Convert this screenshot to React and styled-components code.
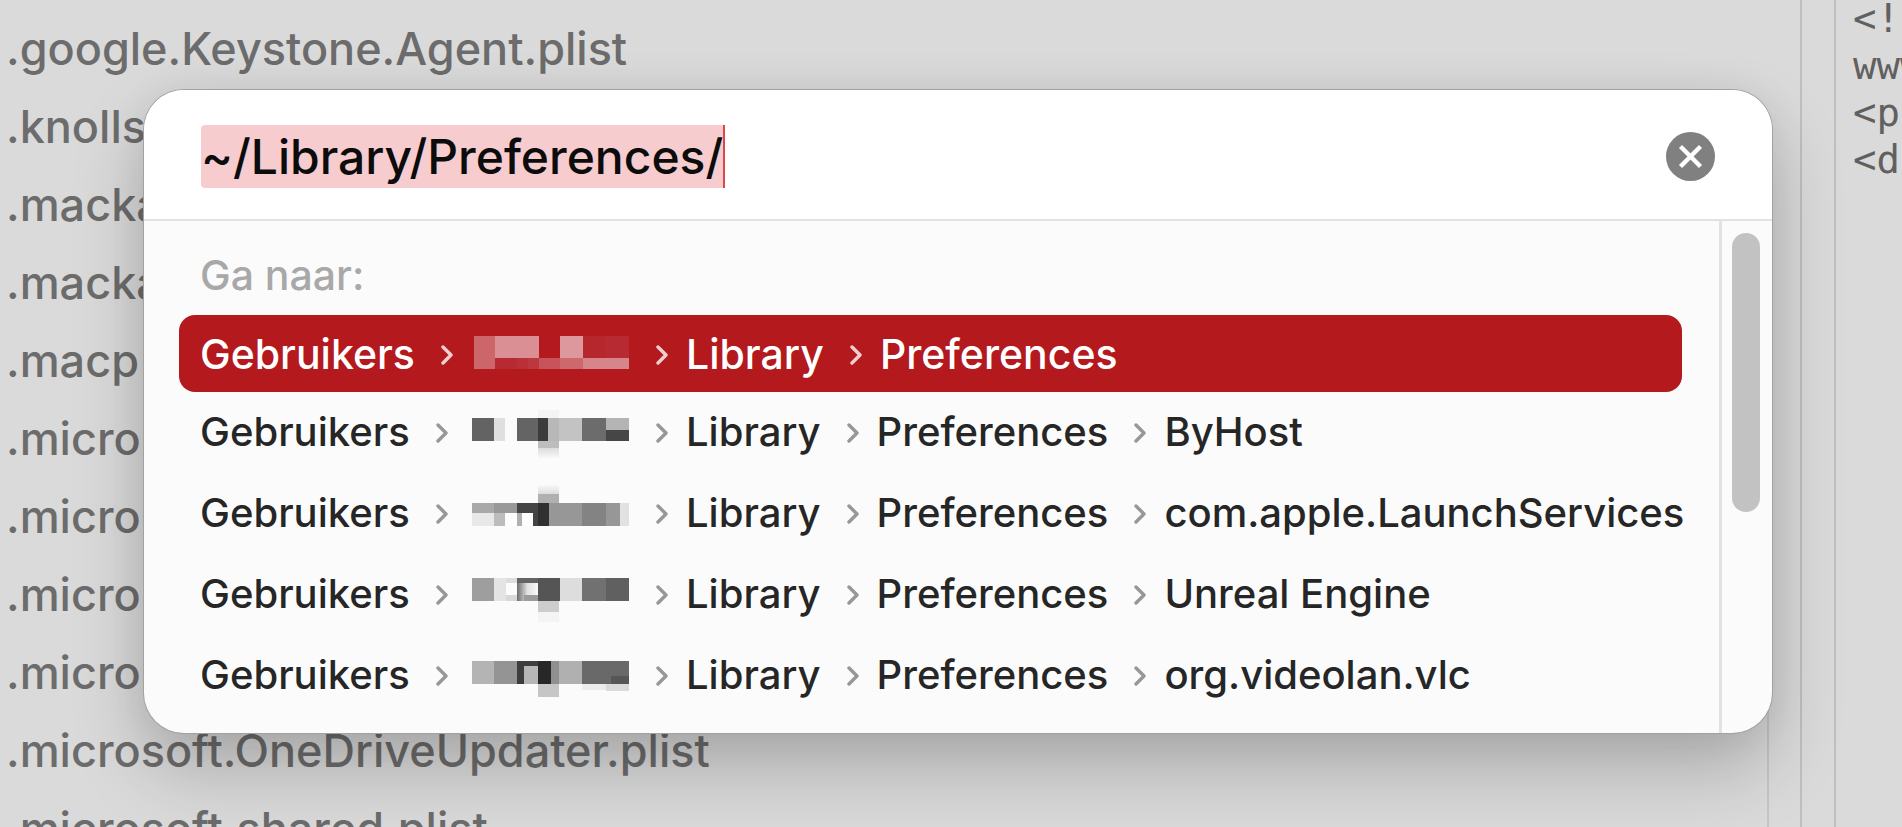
import React, { useState } from "react";
import styled, { createGlobalStyle, css } from "styled-components";

const GlobalStyle = createGlobalStyle`
  * { box-sizing: border-box; }
  body {
    margin: 0;
    background: #d9d9d9;
    font-family: Inter, "Liberation Sans", sans-serif;
    overflow: hidden;
  }
`;

const Desktop = styled.main`
  position: relative;
  display: flex;
  height: 100vh;
  overflow: hidden;
  background: #dadada;
`;

const FileColumn = styled.ul`
  flex: 1;
  min-width: 0;
  margin: 0;
  padding: 10px 0 0 6px;
  list-style: none;
`;

const FileName = styled.li`
  height: 78px;
  line-height: 78px;
  font-size: 45px;
  font-weight: 500;
  color: #6c6c6c;
  white-space: nowrap;
`;

const ColumnScroller = styled.div`
  width: 33px;
  margin-top: 130px;
  border-left: 2px solid #c6c6c6;
`;

const ColumnDivider = styled.div`
  width: 36px;
  border: solid #bfbfbf;
  border-width: 0 2px;
`;

const Preview = styled.pre`
  width: 66px;
  margin: -5px 0 0;
  padding: 0 0 0 17px;
  overflow: hidden;
  font-family: "DejaVu Sans Mono", monospace;
  font-size: 39px;
  line-height: 47px;
  color: #606060;
`;

const Dialog = styled.form`
  position: absolute;
  top: 90px;
  left: 144px;
  right: 130px;
  border-radius: 40px;
  overflow: hidden;
  background: #fbfbfb;
  box-shadow:
    0 0 0 1px #a2a2a2,
    0 0 40px rgba(0, 0, 0, 0.06),
    0 36px 72px rgba(0, 0, 0, 0.22);
`;

const SearchBar = styled.header`
  display: flex;
  align-items: center;
  justify-content: space-between;
  height: 131px;
  padding: 3px 57px 0;
  background: #fff;
  border-bottom: 2px solid #e2e2e2;
`;

const PathInput = styled.input`
  field-sizing: content;
  height: 63px;
  padding: 0;
  border: 0;
  border-right: 2px solid #e0454c;
  border-radius: 4px 0 0 4px;
  outline: 0;
  background: #f7cccf;
  color: #0c0c0c;
  font: 500 48px/63px Inter, "Liberation Sans", sans-serif;
`;

const ClearButton = styled.button`
  width: 49px;
  height: 49px;
  padding: 0;
  border: 0;
  border-radius: 50%;
  background: #808080;
  svg { display: block; }
`;

const Results = styled.div`
  display: flex;
`;

const ResultPane = styled.div`
  flex: 1;
  min-width: 0;
  padding: 30px 37px 17px 35px;
`;

const ResultTitle = styled.h2`
  height: 64px;
  margin: 0;
  padding-left: 21px;
  font-size: 41px;
  line-height: 48px;
  font-weight: 500;
  color: #a8a8a8;
`;

const ResultList = styled.ul`
  margin: 0;
  padding: 0;
  list-style: none;
`;

const ResultRow = styled.button`
  display: flex;
  align-items: center;
  width: 100%;
  height: 81px;
  padding: 0 0 2px 21px;
  border: 0;
  border-radius: 16px;
  background: transparent;
  color: #262626;
  font: 500 40px/48px Inter, "Liberation Sans", sans-serif;
  white-space: nowrap;
  ${(p) =>
    p.$selected &&
    css`
      height: 77px;
      padding-bottom: 0;
      background: #b3191d;
      color: #fff;
      font-size: 41px;
    `}
`;

const RootCrumb = styled.span`
  display: flex;
  flex: none;
  align-items: center;
  width: 272px;
`;

const ChevronIcon = styled.svg`
  flex: none;
  width: 12px;
  height: 20px;
  margin: 2px 18px 0 26px;
  fill: none;
  stroke: ${(p) => (p.$selected ? "#f0cfd0" : "#979797")};
  stroke-width: 3.4;
  stroke-linecap: round;
  stroke-linejoin: round;
`;

const Mosaic = styled.svg`
  flex: none;
  width: 158px;
  height: 77px;
`;

const ScrollTrack = styled.div`
  width: 53px;
  padding: 12px 9px 0 10px;
  border-left: 3px solid #e2e2e2;
`;

const ScrollThumb = styled.div`
  height: 279px;
  width: 28px;
  border-radius: 14px;
  background: #c2c2c2;
`;

const FILES = [
  ".google.Keystone.Agent.plist",
  ".knolls",
  ".macka",
  ".macka",
  ".macp",
  ".micro",
  ".micro",
  ".micro",
  ".micro",
  ".microsoft.OneDriveUpdater.plist",
  ".microsoft.shared.plist",
];

// Each block of a hidden user name: x, y, width, height, fill.
const ROWS = [
  {
    selected: true,
    blocks: [
      [2, 21, 21, 33, "#cc666b"],
      [23, 21, 44, 22, "#d98f93"],
      [67, 21, 21, 22, "#b3191f"],
      [88, 21, 23, 22, "#dc989c"],
      [111, 21, 23, 22, "#b5262d"],
      [134, 21, 23, 22, "#b72a31"],
      [23, 43, 22, 11, "#b82a31"],
      [45, 43, 11, 11, "#b93036"],
      [56, 43, 11, 11, "#bb383e"],
      [67, 43, 21, 11, "#c7545a"],
      [88, 43, 23, 11, "#cd686d"],
      [111, 43, 46, 11, "#d6868a"],
    ],
  },
  {
    leaf: "ByHost",
    blocks: [
      [0, 25, 22, 23, "#636363"],
      [22, 25, 11, 23, "#dfdfdf"],
      [45, 25, 21, 23, "#646464"],
      [66, 17, 21, 8, "#f4f4f4"],
      [66, 25, 10, 23, "#3c3c3c"],
      [76, 25, 11, 23, "#b8b8b8"],
      [87, 25, 23, 23, "#c3c3c3"],
      [110, 25, 24, 23, "#6c6c6c"],
      [134, 25, 23, 12, "#b4b4b4"],
      [134, 37, 23, 11, "#464646"],
      [66, 48, 21, 7, "#bdbdbd"],
      [66, 55, 21, 10, "url(#fadeDown)"],
    ],
  },
  {
    leaf: "com.apple.LaunchServices",
    blocks: [
      [0, 29, 22, 10, "#a9a9a9"],
      [0, 39, 22, 13, "#e8e8e8"],
      [22, 29, 23, 10, "#999999"],
      [22, 39, 11, 13, "#bcbcbc"],
      [33, 39, 12, 13, "#fdfdfd"],
      [45, 29, 21, 10, "#454545"],
      [45, 39, 5, 13, "#b0b0b0"],
      [50, 39, 11, 13, "#fdfdfd"],
      [61, 39, 5, 13, "#444444"],
      [66, 11, 21, 9, "url(#fadeUp)"],
      [66, 20, 21, 9, "#b0b0b0"],
      [66, 29, 11, 23, "#303030"],
      [77, 29, 33, 23, "#979797"],
      [110, 29, 24, 23, "#838383"],
      [134, 29, 14, 23, "#979797"],
      [148, 29, 9, 23, "#e2e2e2"],
    ],
  },
  {
    leaf: "Unreal Engine",
    blocks: [
      [0, 23, 22, 23, "#9e9e9e"],
      [22, 23, 12, 23, "#e4e4e4"],
      [34, 23, 11, 5, "#dddddd"],
      [34, 28, 11, 12, "#fbfbfb"],
      [34, 40, 11, 6, "#d8d8d8"],
      [45, 23, 21, 23, "url(#ashRight)"],
      [45, 23, 21, 5, "#656565"],
      [52, 40, 14, 6, "#9b9b9b"],
      [66, 23, 22, 23, "#555555"],
      [88, 23, 22, 23, "#dddddd"],
      [110, 23, 24, 23, "#717171"],
      [134, 23, 23, 23, "#606060"],
      [66, 46, 21, 11, "#cdcdcd"],
      [66, 57, 21, 10, "#f4f4f4"],
    ],
  },
  {
    leaf: "org.videolan.vlc",
    blocks: [
      [0, 25, 22, 23, "#b4b4b4"],
      [22, 25, 23, 23, "#949494"],
      [45, 25, 21, 23, "#3d3d3d"],
      [52, 30, 14, 18, "#b6b6b6"],
      [66, 25, 13, 23, "#272727"],
      [79, 25, 8, 23, "#909090"],
      [87, 25, 23, 23, "#b0b0b0"],
      [110, 25, 47, 23, "#696969"],
      [139, 40, 18, 8, "#565656"],
      [66, 48, 21, 13, "#c6c6c6"],
      [110, 48, 24, 6, "#ececec"],
      [134, 48, 23, 7, "#dadada"],
    ],
  },
];

function Chevron({ selected }) {
  return (
    <ChevronIcon viewBox="0 0 12 20" $selected={selected} aria-hidden="true">
      <path d="M2 2L10 10L2 18" />
    </ChevronIcon>
  );
}

function HiddenName({ blocks }) {
  return (
    <Mosaic viewBox="0 0 158 77" shapeRendering="crispEdges" aria-hidden="true">
      <defs>
        <linearGradient id="fadeDown" x1="0" y1="0" x2="0" y2="1">
          <stop offset="0" stopColor="#dcdcdc" />
          <stop offset="1" stopColor="#f8f8f8" />
        </linearGradient>
        <linearGradient id="fadeUp" x1="0" y1="0" x2="0" y2="1">
          <stop offset="0" stopColor="#f8f8f8" />
          <stop offset="1" stopColor="#dcdcdc" />
        </linearGradient>
        <linearGradient id="ashRight">
          <stop offset="0" stopColor="#6c6c6c" />
          <stop offset="0.5" stopColor="#e2e2e2" />
          <stop offset="1" stopColor="#fafafa" />
        </linearGradient>
      </defs>
      {blocks.map(([x, y, width, height, fill], i) => (
        <rect key={i} x={x} y={y} width={width} height={height} fill={fill} />
      ))}
    </Mosaic>
  );
}

export default function App() {
  const [path, setPath] = useState("~/Library/Preferences/");
  return (
    <Desktop>
      <GlobalStyle />
      <FileColumn>
        {FILES.map((name, i) => (
          <FileName key={i}>{name}</FileName>
        ))}
      </FileColumn>
      <ColumnScroller />
      <ColumnDivider />
      <Preview>{"<!\nwww\n<p\n<d"}</Preview>

      <Dialog role="dialog" aria-label="Ga naar" onSubmit={(e) => e.preventDefault()}>
        <SearchBar>
          <PathInput
            aria-label="Pad"
            spellCheck={false}
            value={path}
            onChange={(e) => setPath(e.target.value)}
          />
          <ClearButton type="button" aria-label="Wis" onClick={() => setPath("")}>
            <svg viewBox="0 0 49 49" width="49" height="49" aria-hidden="true">
              <path d="M14.5 14.5L34.5 34.5M34.5 14.5L14.5 34.5" stroke="#fff" strokeWidth="4.4" />
            </svg>
          </ClearButton>
        </SearchBar>
        <Results>
          <ResultPane>
            <ResultTitle>Ga naar:</ResultTitle>
            <ResultList>
              {ROWS.map(({ selected, leaf, blocks }, i) => (
                <li key={i}>
                  <ResultRow type="button" $selected={selected}>
                    <RootCrumb>
                      Gebruikers
                      <Chevron selected={selected} />
                    </RootCrumb>
                    <HiddenName blocks={blocks} />
                    <Chevron selected={selected} />
                    Library
                    <Chevron selected={selected} />
                    Preferences
                    {leaf && <Chevron />}
                    {leaf}
                  </ResultRow>
                </li>
              ))}
            </ResultList>
          </ResultPane>
          <ScrollTrack>
            <ScrollThumb />
          </ScrollTrack>
        </Results>
      </Dialog>
    </Desktop>
  );
}
